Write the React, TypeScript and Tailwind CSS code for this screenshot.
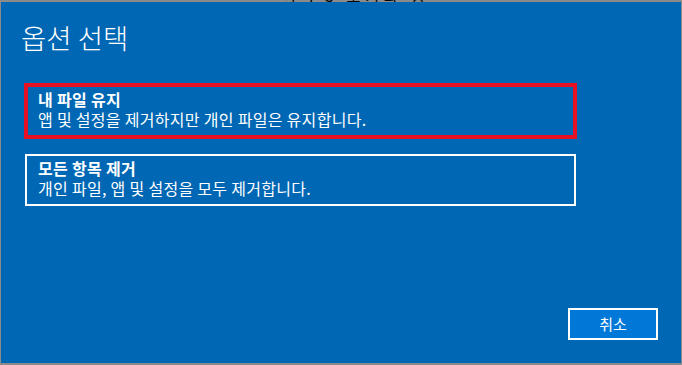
import React from "react";

const font = { fontFamily: '"Noto Sans CJK KR", "Noto Sans", sans-serif' };

function Option({
  title,
  desc,
  selected,
}: {
  title: string;
  desc: string;
  selected?: boolean;
}) {
  if (selected) {
    return (
      <div className="ml-[23px] w-[553px] h-[56px] border-4 border-[#e81123] pt-[2px] pl-[10px]">
        <div className="text-[16px] leading-[20px] font-bold text-white tracking-[0.3px]">{title}</div>
        <div className="text-[16px] leading-[20px] text-white tracking-[0.3px]">{desc}</div>
      </div>
    );
  }
  return (
    <div className="ml-[24px] w-[551px] h-[52px] border-2 border-white pt-[2px] pl-[11px]">
      <div className="text-[16px] leading-[20px] font-bold text-white tracking-[0.3px]">{title}</div>
      <div className="text-[16px] leading-[20px] text-white tracking-[0.3px]">{desc}</div>
    </div>
  );
}

export default function App() {
  return (
    <div
      className="w-[682px] h-[365px] bg-[#8b8b8b] flex flex-col pb-[2px] pl-[1px] pr-[1px] overflow-hidden"
      style={font}
    >
      <div className="h-[2px] overflow-hidden flex justify-center pl-[30px]">
        <span className="text-[15px] leading-[15px] -mt-[12px] text-black whitespace-nowrap tracking-[5px]">
          이 PC 초기화 중
        </span>
      </div>
      <div className="flex-1 bg-[#0067b4] flex flex-col">
        <div className="pt-[17px] pl-[20px] text-[27.5px] leading-[36px] font-light text-white">
          옵션 선택
        </div>
        <div className="mt-[28px]">
          <Option
            selected
            title="내 파일 유지"
            desc="앱 및 설정을 제거하지만 개인 파일은 유지합니다."
          />
        </div>
        <div className="mt-[15px]">
          <Option
            title="모든 항목 제거"
            desc="개인 파일, 앱 및 설정을 모두 제거합니다."
          />
        </div>
        <div className="flex-1" />
        <div className="flex justify-end pr-[23px] pb-[23px]">
          <button className="w-[90px] h-[32px] border-2 border-white bg-[#0078d7] text-white text-[15px] leading-[20px] flex items-center justify-center">
            취소
          </button>
        </div>
      </div>
    </div>
  );
}
